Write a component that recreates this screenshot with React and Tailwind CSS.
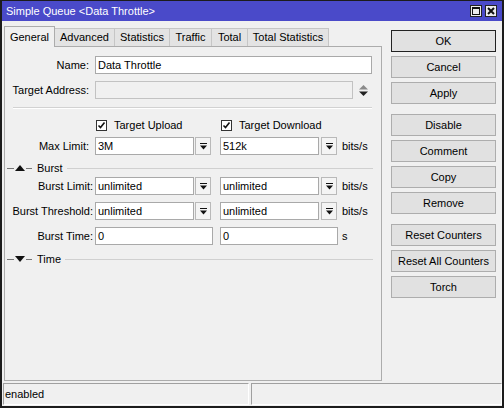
import React from 'react';

const DropIcon = () => (
  <svg width="7" height="7" viewBox="0 0 7 7">
    <rect x="0" y="0" width="7" height="1" fill="#111" />
    <path d="M0 2.5h7L3.5 6.5z" fill="#111" />
  </svg>
);

const Field = ({ w, value, disabled }) => (
  <div
    className={`h-[18px] border px-[2px] leading-[16px] whitespace-nowrap overflow-hidden ${
      disabled ? 'bg-[#f0f0f0] border-[#c2c2c2]' : 'bg-white border-[#a9a9a9]'
    }`}
    style={{ width: w }}
  >
    {value}
  </div>
);

const DropBtn = () => (
  <div className="w-[16px] h-[18px] border border-[#b9b9b9] bg-[#f4f4f4] flex items-center justify-center">
    <DropIcon />
  </div>
);

const Check = ({ label }) => (
  <div className="flex items-center">
    <div className="w-[11px] h-[11px] border border-[#333] bg-white flex items-center justify-center">
      <svg width="9" height="9" viewBox="0 0 9 9">
        <path d="M1.5 4.5l2 2 4-5" stroke="#111" strokeWidth="1.6" fill="none" />
      </svg>
    </div>
    <span className="ml-[7px]">{label}</span>
  </div>
);

const Section = ({ open, label }) => (
  <div className="flex items-center h-[14px]">
    <div className="ml-[2px] w-[7px] h-px bg-[#777]" />
    <svg width="10" height="6" viewBox="0 0 10 6" className="ml-px">
      {open ? <path d="M0 6h10L5 0z" fill="#111" /> : <path d="M0 0h10L5 6z" fill="#111" />}
    </svg>
    <div className="ml-px w-[6px] h-px bg-[#777]" />
    <span className="ml-[5px]">{label}</span>
    <div className="flex-1 ml-[4px] mr-[8px] h-px bg-[#d0d0d0]" />
  </div>
);

const Btn = ({ children, primary, className = '' }) => (
  <div
    className={`h-[22px] w-[105px] flex items-center justify-center bg-[#e1e1e1] border ${
      primary ? 'border-[#222]' : 'border-[#adadad]'
    } ${className}`}
  >
    {children}
  </div>
);

const tabs = [
  ['General', 51],
  ['Advanced', 60],
  ['Statistics', 55],
  ['Traffic', 42],
  ['Total', 36],
  ['Total Statistics', 81],
];

export default function App() {
  return (
    <div className="w-[504px] h-[408px] bg-[#f0f0f0] border-t border-x-2 border-b-2 border-[#1c1c1c] flex flex-col font-['Liberation_Sans',Arial,sans-serif] text-[11px] text-black overflow-hidden">
      <div className="h-[20px] bg-[#4a4ac9] flex items-center pl-[4px] pr-[5px]">
        <span className="text-white flex-1">Simple Queue &lt;Data Throttle&gt;</span>
        <div className="w-[12px] h-[12px] bg-[#ececec] border border-[#222] flex items-center justify-center">
          <div className="w-[8px] h-[8px] border border-[#111] border-t-2" />
        </div>
        <div className="ml-[3px] w-[12px] h-[12px] bg-[#ececec] border border-[#222] flex items-center justify-center">
          <svg width="8" height="8" viewBox="0 0 8 8">
            <path d="M1 1l6 6M7 1l-6 6" stroke="#111" strokeWidth="2" />
          </svg>
        </div>
      </div>

      <div className="h-[360px] flex">
        <div className="ml-[2px] mt-[5px] w-[378px] flex flex-col">
          <div className="h-[20px] flex items-end">
            {tabs.map(([t, w], i) =>
              i === 0 ? (
                <div
                  key={t}
                  className="h-[21px] -mb-px relative z-10 bg-[#f0f0f0] border-t border-l border-r border-[#acacac] flex items-center justify-center"
                  style={{ width: w }}
                >
                  {t}
                </div>
              ) : (
                <div
                  key={t}
                  className="h-[18px] bg-[#e3e3e3] border-t border-r border-[#c6c6c6] flex items-center justify-center"
                  style={{ width: w }}
                >
                  {t}
                </div>
              )
            )}
          </div>
          <div className="flex-1 border border-[#acacac] flex flex-col">
            <div className="mt-[9px] flex items-center">
              <div className="w-[84px] text-right">Name:</div>
              <div className="ml-[6px]">
                <Field w={277} value="Data Throttle" />
              </div>
            </div>
            <div className="mt-[7px] flex items-center">
              <div className="w-[84px] text-right">Target Address:</div>
              <div className="ml-[6px]">
                <Field w={258} disabled value="" />
              </div>
              <svg width="9" height="11" viewBox="0 0 9 11" className="ml-[6px]">
                <path d="M0 4.5h9L4.5 0z" fill="#8a8a8a" />
                <path d="M0 6.5h9L4.5 11z" fill="#222" />
              </svg>
            </div>
            <div className="mt-[8px] ml-[8px] w-[359px] h-px bg-[#d2d2d2] border-b border-white box-content" />
            <div className="mt-[9px] h-[14px] flex items-center">
              <div className="ml-[91px] w-[125px]">
                <Check label="Target Upload" />
              </div>
              <Check label="Target Download" />
            </div>
            <div className="mt-[5px] flex items-center">
              <div className="w-[84px] text-right">Max Limit:</div>
              <div className="ml-[6px] flex items-center">
                <Field w={99} value="3M" />
                <div className="ml-px"><DropBtn /></div>
                <div className="ml-[9px]"><Field w={99} value="512k" /></div>
                <div className="ml-[2px]"><DropBtn /></div>
                <span className="ml-[5px]">bits/s</span>
              </div>
            </div>
            <div className="mt-[6px]">
              <Section open label="Burst" />
            </div>
            <div className="mt-[2px] flex items-center">
              <div className="w-[88px] text-right">Burst Limit:</div>
              <div className="ml-[2px] flex items-center">
                <Field w={99} value="unlimited" />
                <div className="ml-px"><DropBtn /></div>
                <div className="ml-[9px]"><Field w={99} value="unlimited" /></div>
                <div className="ml-[2px]"><DropBtn /></div>
                <span className="ml-[5px]">bits/s</span>
              </div>
            </div>
            <div className="mt-[7px] flex items-center">
              <div className="w-[88px] text-right">Burst Threshold:</div>
              <div className="ml-[2px] flex items-center">
                <Field w={99} value="unlimited" />
                <div className="ml-px"><DropBtn /></div>
                <div className="ml-[9px]"><Field w={99} value="unlimited" /></div>
                <div className="ml-[2px]"><DropBtn /></div>
                <span className="ml-[5px]">bits/s</span>
              </div>
            </div>
            <div className="mt-[7px] flex items-center">
              <div className="w-[88px] text-right">Burst Time:</div>
              <div className="ml-[2px] flex items-center">
                <Field w={118} value="0" />
                <div className="ml-[7px]"><Field w={118} value="0" /></div>
                <span className="ml-[4px]">s</span>
              </div>
            </div>
            <div className="mt-[7px]">
              <Section label="Time" />
            </div>
          </div>
        </div>

        <div className="ml-[9px] mt-[9px] flex flex-col gap-[4px]">
          <Btn primary>OK</Btn>
          <Btn>Cancel</Btn>
          <Btn>Apply</Btn>
          <Btn className="mt-[6px]">Disable</Btn>
          <Btn>Comment</Btn>
          <Btn>Copy</Btn>
          <Btn>Remove</Btn>
          <Btn className="mt-[6px]">Reset Counters</Btn>
          <Btn>Reset All Counters</Btn>
          <Btn>Torch</Btn>
        </div>
      </div>

      <div className="mt-[2px] h-[22px] flex">
        <div className="ml-px w-[246px] border-t border-l border-[#a0a0a0] border-b border-r border-b-white border-r-white flex items-center pl-px">
          enabled
        </div>
        <div className="ml-[2px] flex-1 border-t border-l border-[#a0a0a0] border-b border-r border-b-white border-r-white" />
      </div>
    </div>
  );
}
